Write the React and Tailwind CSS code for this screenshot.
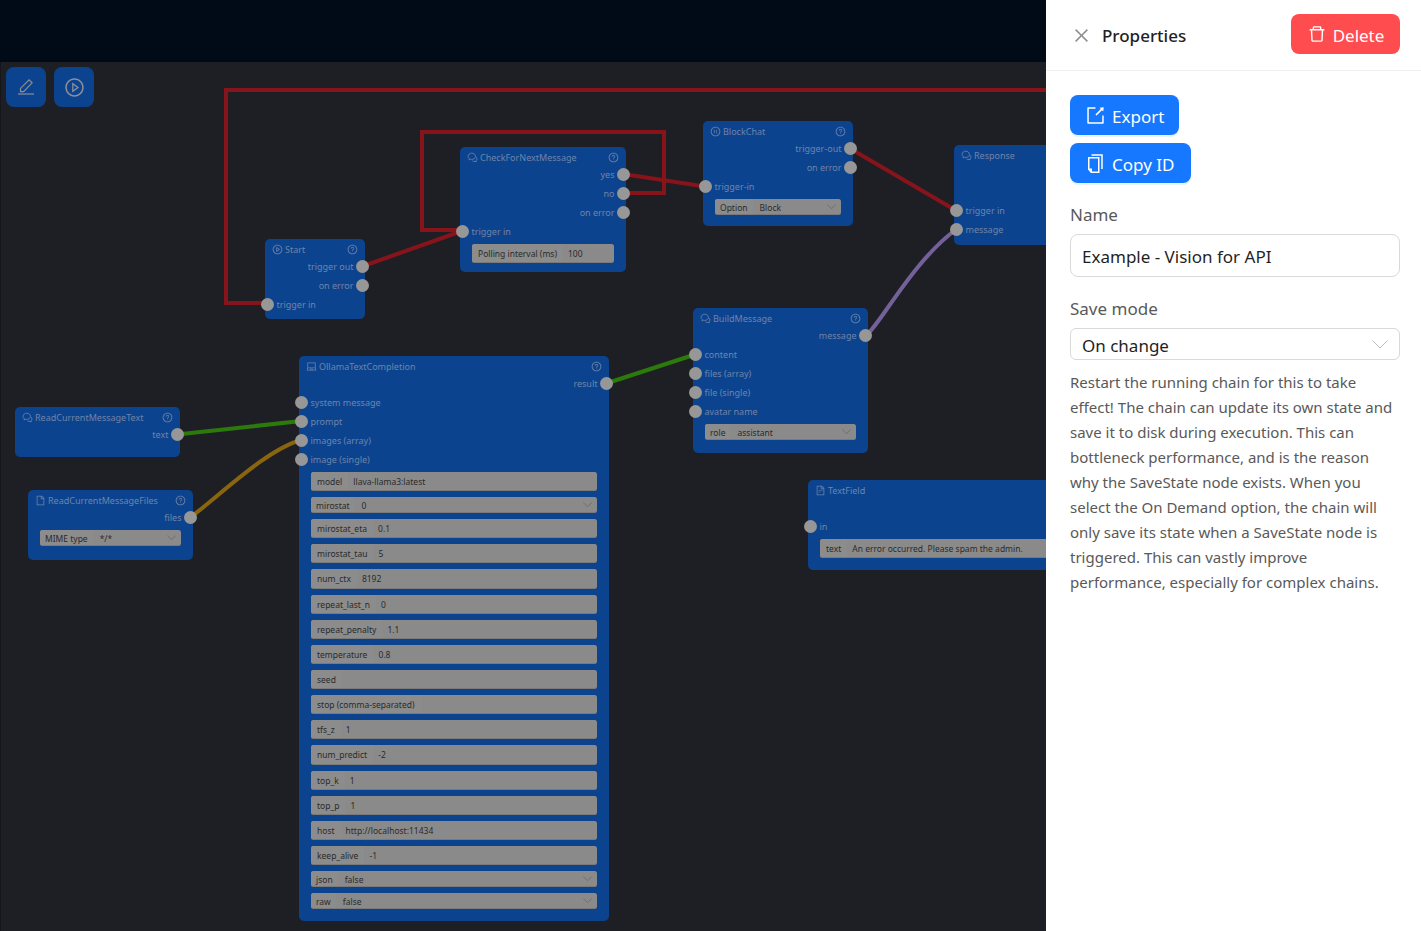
import {
  AiOutlineClose,
  AiOutlineDelete,
  AiOutlineExport,
  AiOutlineFile,
  AiOutlineFileText,
  AiOutlineLaptop,
  AiOutlinePauseCircle,
  AiOutlinePlayCircle,
  AiOutlineQuestionCircle,
} from "react-icons/ai";

function ChatIcon({ size, className }) {
  return (
    <svg width={size} height={size} viewBox="0 0 12 12" fill="none" stroke="currentColor" strokeWidth="0.9" className={className}>
      <path d="M5.2 1.3C3 1.3 1.2 2.8 1.2 4.7c0 1 .5 1.9 1.3 2.5L2.2 8.7l1.7-.8c.4.1.8.2 1.3.2 2.2 0 4-1.5 4-3.4S7.4 1.3 5.2 1.3z" />
      <path d="M9.9 5.6c.6.5 1 1.2 1 2 0 .8-.4 1.5-1 2l.2 1.2-1.3-.6c-1 .3-2.1.1-2.9-.5" />
    </svg>
  );
}

const ollamaFields = [
  { label: "model", value: "llava-llama3:latest" },
  { label: "mirostat", value: "0", select: true },
  { label: "mirostat_eta", value: "0.1" },
  { label: "mirostat_tau", value: "5" },
  { label: "num_ctx", value: "8192" },
  { label: "repeat_last_n", value: "0" },
  { label: "repeat_penalty", value: "1.1" },
  { label: "temperature", value: "0.8" },
  { label: "seed", value: "" },
  { label: "stop (comma-separated)", value: "" },
  { label: "tfs_z", value: "1" },
  { label: "num_predict", value: "-2" },
  { label: "top_k", value: "1" },
  { label: "top_p", value: "1" },
  { label: "host", value: "http://localhost:11434" },
  { label: "keep_alive", value: "-1" },
  { label: "json", value: "false", select: true },
  { label: "raw", value: "false", select: true },
];

const nodes = [
  {
    title: "Start",
    icon: AiOutlinePlayCircle,
    x: 265,
    y: 239,
    w: 100,
    h: 80,
    rows: [
      { label: "trigger out", side: "right" },
      { label: "on error", side: "right" },
      { label: "trigger in", side: "left" },
    ],
  },
  {
    title: "CheckForNextMessage",
    icon: ChatIcon,
    x: 460,
    y: 147,
    w: 166,
    h: 125,
    rows: [
      { label: "yes", side: "right" },
      { label: "no", side: "right" },
      { label: "on error", side: "right" },
      { label: "trigger in", side: "left" },
    ],
    fields: [{ label: "Polling interval (ms)", value: "100" }],
  },
  {
    title: "BlockChat",
    icon: AiOutlinePauseCircle,
    x: 703,
    y: 121,
    w: 150,
    h: 105,
    rows: [
      { label: "trigger-out", side: "right" },
      { label: "on error", side: "right" },
      { label: "trigger-in", side: "left" },
    ],
    fields: [{ label: "Option", value: "Block", select: true }],
  },
  {
    title: "Response",
    icon: ChatIcon,
    x: 954,
    y: 145,
    w: 130,
    h: 100,
    noHelp: true,
    rows: [
      {},
      {},
      { label: "trigger in", side: "left" },
      { label: "message", side: "left" },
    ],
  },
  {
    title: "BuildMessage",
    icon: ChatIcon,
    x: 693,
    y: 308,
    w: 175,
    h: 145,
    rows: [
      { label: "message", side: "right" },
      { label: "content", side: "left" },
      { label: "files (array)", side: "left" },
      { label: "file (single)", side: "left" },
      { label: "avatar name", side: "left" },
    ],
    fields: [{ label: "role", value: "assistant", select: true }],
  },
  {
    title: "OllamaTextCompletion",
    icon: AiOutlineLaptop,
    x: 299,
    y: 356,
    w: 310,
    h: 565,
    rows: [
      { label: "result", side: "right" },
      { label: "system message", side: "left" },
      { label: "prompt", side: "left" },
      { label: "images (array)", side: "left" },
      { label: "image (single)", side: "left" },
    ],
    fields: ollamaFields,
  },
  {
    title: "ReadCurrentMessageText",
    icon: ChatIcon,
    x: 15,
    y: 407,
    w: 165,
    h: 50,
    rows: [{ label: "text", side: "right" }],
  },
  {
    title: "ReadCurrentMessageFiles",
    icon: AiOutlineFile,
    x: 28,
    y: 490,
    w: 165,
    h: 70,
    rows: [{ label: "files", side: "right" }],
    fields: [{ label: "MIME type", value: "*/*", select: true }],
  },
  {
    title: "TextField",
    icon: AiOutlineFileText,
    x: 808,
    y: 480,
    w: 290,
    h: 90,
    noHelp: true,
    rows: [
      {},
      { label: "in", side: "left" },
    ],
    fields: [{ label: "text", value: "An error occurred. Please spam the admin." }],
  },
];

function Chevron({ w, className }) {
  return (
    <svg width={w} height={w / 2 + 1} viewBox="0 0 16 9" fill="none" stroke="currentColor" className={className}>
      <path d="M0.5 0.5L8 8L15.5 0.5" vectorEffect="non-scaling-stroke" />
    </svg>
  );
}

function Field({ label, value, select }) {
  return (
    <div
      className={`flex items-stretch rounded-[2.5px] bg-[#8a8a8a] border-b border-[#7a7a7a] overflow-hidden text-[#2a2a2a] text-[8.5px] ${
        select ? "h-4 leading-[18px]" : "h-[19.15px] leading-[20.5px]"
      }`}
    >
      <span className={`bg-[#8c8c8c] whitespace-nowrap ${select ? "px-[5px]" : "px-[6px]"}`}>{label}</span>
      <span className={`flex-1 whitespace-nowrap ${select ? "pl-[7px]" : "pl-[5px]"}`}>{value}</span>
      {select && <Chevron w={9} className="self-center mr-[5px] text-[#6f6f6f]" />}
    </div>
  );
}

function Node({ node }) {
  const Icon = node.icon;
  return (
    <div
      className="absolute rounded-[5px] bg-[#0b438f] text-[#7084a8] text-[9px] font-['Noto_Sans',sans-serif]"
      style={{ left: node.x, top: node.y, width: node.w, height: node.h }}
    >
      <div className="h-[18px] flex items-center pl-[7px] pr-[7px] pt-[3px]">
        <Icon size={11} className="mr-[2px] shrink-0" />
        <span className="flex-1 whitespace-nowrap">{node.title}</span>
        {!node.noHelp && <AiOutlineQuestionCircle size={11} />}
      </div>
      {node.rows.map((row, i) => (
        <div
          key={i}
          className={`relative h-[19px] leading-[19px] px-3 ${row.side === "right" ? "text-right pr-[11.5px]" : "pl-[11.5px]"}`}
        >
          {row.label}
          {row.side && (
            <span
              className={`absolute top-[3px] size-[13px] rounded-full bg-[#979797] ${
                row.side === "right" ? "right-[-4px]" : "left-[-4.5px]"
              }`}
            />
          )}
        </div>
      ))}
      {node.fields && (
        <div className="mt-[3px] mx-3 flex flex-col gap-[6px]">
          {node.fields.map((f) => (
            <Field key={f.label} {...f} />
          ))}
        </div>
      )}
    </div>
  );
}

function Wires() {
  return (
    <svg className="absolute inset-0" width="1046" height="931" fill="none" strokeLinejoin="miter">
      <g stroke="#86141a" strokeWidth="4">
        <path d="M1046 90H226V303H267" />
        <path d="M623 193H664V132H422V230H462" />
        <path d="M623 174L705 186.5" />
        <path d="M850 148.5L956 210.5" />
        <path d="M362 266.5L462 231" />
      </g>
      <path d="M866 335.5C880 325 912 262 956 229.5" stroke="#75619a" strokeWidth="4" />
      <path d="M177 434.5L301 421" stroke="#2d7a0c" strokeWidth="4" />
      <path d="M606 383.5L695 354.5" stroke="#2d7a0c" strokeWidth="4" />
      <path d="M190 517.5C215 500 265 450 301 440" stroke="#8a6510" strokeWidth="4" />
    </svg>
  );
}

function Canvas() {
  return (
    <div className="relative w-[1046px] shrink-0 bg-[#1e1f24] overflow-hidden shadow-[inset_1px_0_0_#14161b]">
      <div className="h-[62px] bg-[#000b17]" />
      <div className="absolute left-[6px] top-[67px] flex gap-2">
        <button className="size-10 rounded-lg bg-[#0b438f] flex items-center justify-center text-[#8a8f99]">
          <svg width="20" height="20" viewBox="0 0 20 20" fill="none" stroke="currentColor" strokeWidth="1.2">
            <path d="M4.5 14.6v-3.2l8.6-8.6 3 3-8.4 8.8z" />
            <path d="M2 17h16" />
          </svg>
        </button>
        <button className="size-10 rounded-lg bg-[#0b438f] flex items-center justify-center text-[#8a8f99]">
          <AiOutlinePlayCircle size={21} />
        </button>
      </div>
      <Wires />
      {nodes.map((n) => (
        <Node key={n.title} node={n} />
      ))}
    </div>
  );
}

function CopyIcon() {
  return (
    <svg width="17" height="19" viewBox="0 0 17 19" fill="none" stroke="currentColor" strokeWidth="1.5">
      <path d="M1.75 3.75h10v14.5h-7.5l-2.5-3z" />
      <path d="M1.75 15.25h2.5v3" />
      <path d="M4.5 1h10.5v14" />
    </svg>
  );
}

function Panel() {
  return (
    <div className="flex-1 bg-white font-['Noto_Sans',sans-serif] text-[17px]">
      <div className="h-[71px] border-b border-[#f0f0f0] flex items-center pl-[26px] pr-6">
        <AiOutlineClose size={19} className="text-[#8c8c8c] mr-[11px]" />
        <span className="flex-1 text-[#1f1f1f] font-medium pt-[2px]">Properties</span>
        <button className="h-10 w-[109px] -mt-[2px] rounded-lg bg-[#ff4d4f] text-white flex items-center justify-center gap-[6px]">
          <AiOutlineDelete size={20} />
          <span className="pt-[3px]">Delete</span>
        </button>
      </div>
      <div className="px-6 pt-6">
        <div className="flex flex-col items-start gap-2">
          <button className="h-10 pl-[15px] pr-[15px] rounded-lg bg-[#1677ff] text-white flex items-center gap-[6px] shadow-[0_2px_0_rgba(5,145,255,0.1)]">
            <AiOutlineExport size={21} />
            <span className="pt-[3px]">Export</span>
          </button>
          <button className="h-10 pl-[17px] pr-[17px] rounded-lg bg-[#1677ff] text-white flex items-center gap-[8px] shadow-[0_2px_0_rgba(5,145,255,0.1)]">
            <CopyIcon />
            <span className="pt-[3px]">Copy ID</span>
          </button>
        </div>
        <div className="mt-[21px] leading-[22px] text-[#595959]">Name</div>
        <div className="mt-2 h-[43px] w-[330px] rounded-lg border border-[#d9d9d9] px-[11px] pt-[2px] flex items-center text-[#1f1f1f]">
          Example - Vision for API
        </div>
        <div className="mt-[21px] leading-[22px] text-[#595959]">Save mode</div>
        <div className="mt-2 h-8 w-[330px] rounded-md border border-[#d9d9d9] pl-[11px] pr-[11px] flex items-center justify-between text-[#1f1f1f]">
          <span className="pt-[3px]">On change</span>
          <Chevron w={16} className="text-[#bfbfbf]" />
        </div>
        <p className="mt-[10px] w-[330px] text-[15px] leading-[25px] text-[#595959]">
          Restart the running chain for this to take effect! The chain can update its own state and save it to disk
          during execution. This can bottleneck performance, and is the reason why the SaveState node exists. When you
          select the On Demand option, the chain will only save its state when a SaveState node is triggered. This can
          vastly improve performance, especially for complex chains.
        </p>
      </div>
    </div>
  );
}

export default function App() {
  return (
    <div className="flex h-[931px] overflow-hidden">
      <Canvas />
      <Panel />
    </div>
  );
}
